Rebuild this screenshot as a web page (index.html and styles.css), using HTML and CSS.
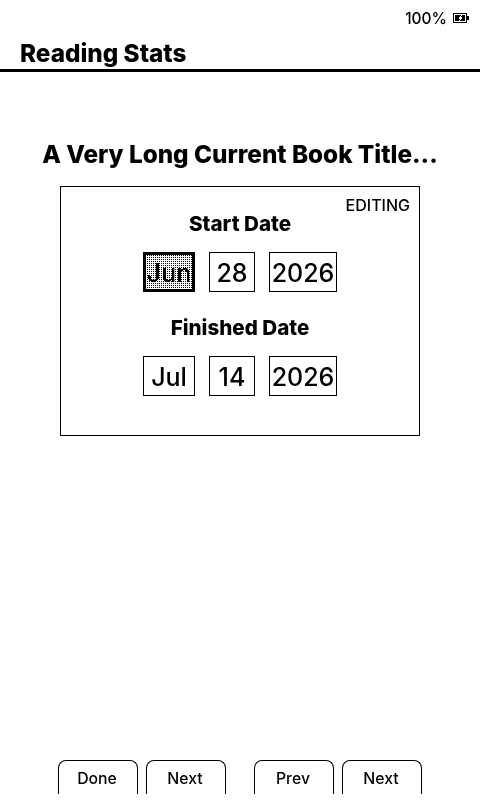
FILE: index.html
```html
<!DOCTYPE html>
<html>
<head>
  <meta charset="UTF-8">
  <meta name="viewport" content="width=device-width, initial-scale=1.0">
  <title>Reading Stats</title>
  <link rel="stylesheet" href="styles.css">
</head>
<body>
  <div class="status">
    <span>100%</span>
    <svg class="battery" width="16" height="10" viewBox="0 0 16 10">
      <path d="M0 0h14v10h-14zM1 1v8h12v-8z" fill="#000" fill-rule="evenodd"/>
      <path d="M14 3h2v4h-2z" fill="#000"/>
      <path d="M2 2h10v6h-10z" fill="#000"/>
      <path d="M8 2l-3 3.500h2l-1 2.500h1l3-3.500h-2l1-2.500z" fill="#fff"/>
    </svg>
  </div>
  <header class="header">
    <h1>Reading Stats</h1>
  </header>

  <main class="content">
    <h2 class="book-title">A Very Long Current Book Title...</h2>
    <section class="card">
      <span class="mode">EDITING</span>
      <h3>Start Date</h3>
      <div class="date-row">
        <div class="field month selected">Jun</div>
        <div class="field day">28</div>
        <div class="field year">2026</div>
      </div>
      <h3>Finished Date</h3>
      <div class="date-row">
        <div class="field month">Jul</div>
        <div class="field day">14</div>
        <div class="field year">2026</div>
      </div>
    </section>
  </main>

  <footer class="buttons">
    <div class="btn-group">
      <div class="btn">Done</div>
      <div class="btn">Next</div>
    </div>
    <div class="btn-group">
      <div class="btn">Prev</div>
      <div class="btn">Next</div>
    </div>
  </footer>
</body>
</html>
```

FILE: styles.css
```css
html, body {
  height: 100%;
}
body {
  font-family: Inter, sans-serif;
  font-weight: 450;
  background-color: #fff;
  color: #000;
  margin: 0;
  display: flex;
  flex-direction: column;
  overflow: hidden;
  filter: contrast(8);
}
.status {
  height: 36px;
  display: flex;
  justify-content: flex-end;
  align-items: center;
  gap: 6px;
  padding-right: 11px;
  font-size: 15.500px;
}
.header {
  height: 33px;
  border-bottom: 3px solid #000;
  padding-left: 20px;
}
h1 {
  margin: 0;
  font-size: 24.3px;
  line-height: 35px;
  font-weight: 800;
}
.content {
  flex: 1;
  padding-top: 66px;
}
.book-title {
  margin: 0 0 16px;
  height: 32px;
  font-size: 24.3px;
  line-height: 32px;
  font-weight: 800;
  text-align: center;
}
.card {
  position: relative;
  box-sizing: border-box;
  width: 360px;
  height: 250px;
  margin: 0 auto;
  border: 1px solid #000;
  padding-top: 25px;
}
.mode {
  position: absolute;
  top: 9px;
  right: 9px;
  font-size: 16px;
  line-height: 18px;
}
h3 {
  margin: 0;
  font-size: 20.600px;
  line-height: 24px;
  font-weight: 800;
  text-align: center;
}
.date-row {
  display: flex;
  justify-content: center;
  gap: 14px;
  margin: 16px 0 24px;
}
.field {
  box-sizing: border-box;
  height: 40px;
  border: 1px solid #000;
  font-size: 25px;
  line-height: 40px;
  text-align: center;
}
.month {
  width: 52px;
}
.day {
  width: 46px;
}
.year {
  width: 68px;
}
.selected {
  border-width: 3px;
  line-height: 36px;
  background: conic-gradient(#000 25%, #fff 0) 0 0 / 2px 2px;
}
.buttons {
  display: flex;
  justify-content: center;
  gap: 28px;
  padding-bottom: 6px;
}
.btn-group {
  display: flex;
  gap: 8px;
}
.btn {
  box-sizing: border-box;
  width: 80px;
  height: 34px;
  border: 1px solid #000;
  border-bottom: none;
  border-radius: 8px 8px 0 0;
  font-size: 15.800px;
  line-height: 36px;
  text-align: center;
  padding-right: 2px;
}
```
